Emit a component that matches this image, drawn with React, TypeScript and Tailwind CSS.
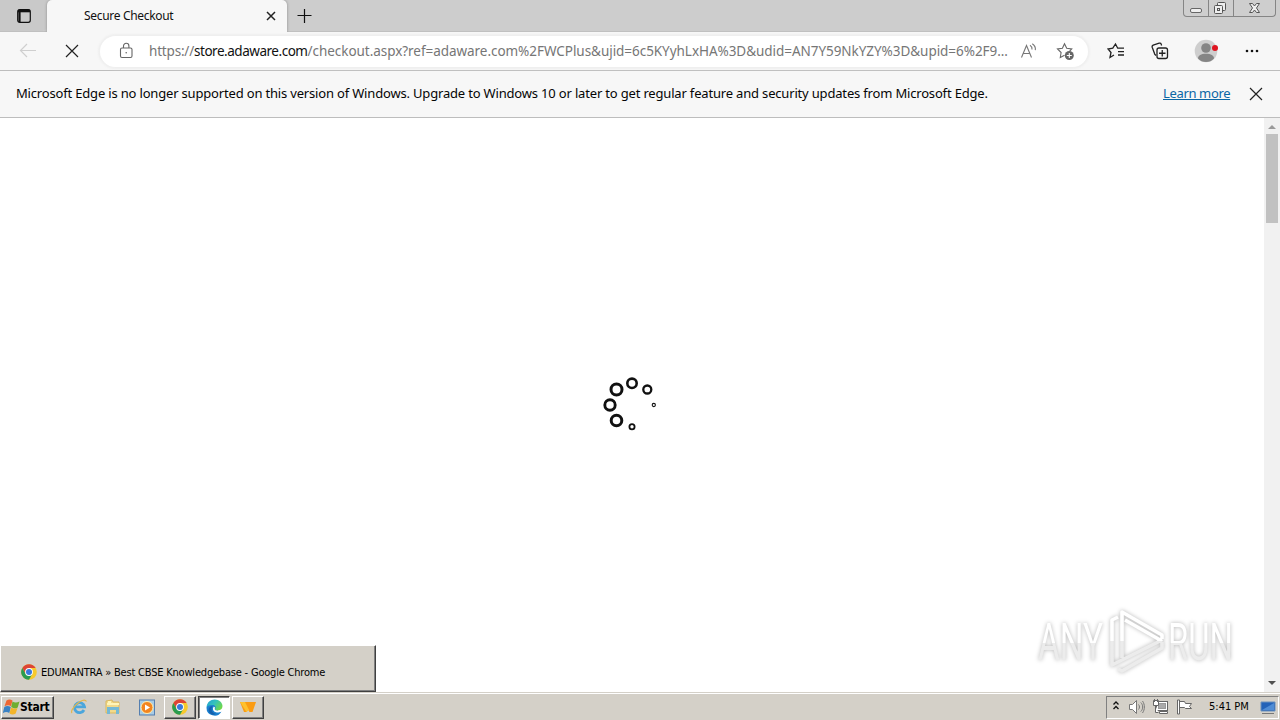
import type { ReactNode } from "react";

const RAISED = "border border-t-white border-l-white border-r-[#404040] border-b-[#404040] shadow-[inset_-1px_-1px_0_#808080]";
const SUNKEN = "border border-t-[#404040] border-l-[#404040] border-r-white border-b-white shadow-[inset_1px_1px_0_#808080]";

const SPINNER_DOTS = [
  { cx: 42, cy: 18.3, r: 4.7, w: 2.6 },
  { cx: 57.3, cy: 24.5, r: 4, w: 2.3 },
  { cx: 63.8, cy: 40, r: 1.6, w: 1.1 },
  { cx: 42, cy: 61.7, r: 2.6, w: 1.8 },
  { cx: 26.5, cy: 55.5, r: 5.3, w: 3 },
  { cx: 20, cy: 40, r: 5.2, w: 2.9 },
  { cx: 26.5, cy: 24.5, r: 5.5, w: 3 },
];

function ChromeIcon() {
  return (
    <svg width="16" height="16" viewBox="0 0 16 16">
      <circle cx="8" cy="8" r="7.8" fill="#f7c92c" />
      <path d="M1.300 4A7.800 7.800 0 0 1 14.700 4H8L4.700 10z" fill="#dd4436" />
      <path d="M1.300 4A7.800 7.800 0 0 0 8 15.800L11.300 10H4.700z" fill="#2a9c50" />
      <circle cx="8" cy="8" r="3.900" fill="#fff" />
      <circle cx="8" cy="8" r="3" fill="#3978dc" />
    </svg>
  );
}

function EdgeIcon() {
  return (
    <svg width="17" height="17" viewBox="0 0 17 17">
      <defs>
        <linearGradient id="edgeTop" x1="0" y1="0" x2="1" y2="0.6">
          <stop offset="0" stopColor="#249fd5" />
          <stop offset="0.5" stopColor="#34c2bd" />
          <stop offset="1" stopColor="#70d84a" />
        </linearGradient>
      </defs>
      <path d="M.5 8.500A8 8 0 0 0 15.500 12.500c-1.500.8-3.500 1-5 .3L16 8A8 8 0 0 0 .5 8.500z" fill="#1a80d0" />
      <path d="M.6 8C1 3.400 4.400.5 8.700.5c4.600 0 7.800 3.200 7.800 6.600 0 3-2.200 4.500-4.800 4.500-1.900 0-3-.7-2.500-1.500.8-1.200.8-4-2.700-4C3.400 6.100 1.500 7 .6 8z" fill="url(#edgeTop)" />
      <path d="M6.700 7.300C4.300 9.800 6 14 10 15.100 7 16.500 3.500 15.400 2.700 12 2.100 9.100 4.100 7.100 6.700 7.300z" fill="#1561ad" />
      <path d="M8.500 8.200c-1.500 1.500-.6 4 2.300 4.300 1.900.2 3.700-.3 5.200-1.500" fill="none" stroke="#fff" strokeWidth="1.800" />
    </svg>
  );
}

function WindowControls() {
  return (
    <div className="flex h-[17px] w-[93px] rounded-b-[4px] border border-t-0 border-[#858585] bg-[#cecece]">
      <div className="w-[25px] border-r border-[#858585]">
        <svg width="24" height="16" viewBox="0 0 24 16">
          <rect x="6.500" y="8.500" width="11" height="4" rx="1.500" fill="#eee" stroke="#666" />
        </svg>
      </div>
      <div className="w-[25px] border-r border-[#858585]">
        <svg width="24" height="16" viewBox="0 0 24 16" fill="#eee" stroke="#555">
          <rect x="8.500" y="2.500" width="8" height="8" rx="1" />
          <rect x="5.500" y="5.500" width="8" height="8" rx="1" />
          <rect x="8.500" y="8.500" width="2" height="2" />
        </svg>
      </div>
      <svg width="41" height="16" viewBox="0 0 41 16">
        <path d="M15.500 3.500h3l2 2.500 2-2.500h3l-3 4.500 3 4.500h-3l-2-2.500-2 2.500h-3l3-4.500z" fill="#eee" stroke="#555" strokeLinejoin="round" />
      </svg>
    </div>
  );
}

function TabStrip() {
  return (
    <div className="flex h-8 justify-between border-b border-[#c0c0c0] bg-[#cdcdcd]">
      <div className="flex">
        <div className="flex w-[47px] items-center justify-center rounded-br-[5px] bg-[#c9c9c9]">
          <svg width="16" height="16" viewBox="0 0 16 16" fill="none" stroke="#111" strokeWidth="1.200">
            <rect x="1.700" y="1.700" width="12.600" height="12.600" rx="2" />
            <path d="M2 3h12" strokeWidth="2.600" />
            <path d="M3.500 3v11" strokeWidth="2.200" />
          </svg>
        </div>
        <div className="-mb-px flex h-8 w-[240px] items-center justify-between rounded-t-[5px] bg-[#f7f7f7] pr-[10px] pl-[37px] shadow-[0_0_3px_#888]">
          <span className="text-[12px] tracking-[-0.320px] whitespace-nowrap text-[#111]">Secure Checkout</span>
          <svg width="12" height="12" viewBox="0 0 12 12" stroke="#222" strokeWidth="1.500">
            <path d="M2 2l8 8M10 2l-8 8" />
          </svg>
        </div>
        <svg className="mt-2 ml-[10px]" width="16" height="16" viewBox="0 0 16 16" stroke="#111" strokeWidth="1.200">
          <path d="M7.500 1v14M.5 7.500h14" />
        </svg>
      </div>
      <div className="mr-1">
        <WindowControls />
      </div>
    </div>
  );
}

function Toolbar() {
  return (
    <div className="flex h-[39px] items-center border-b border-[#bdbdbd] bg-[#f7f7f7]">
      <svg className="ml-[19px]" width="18" height="16" viewBox="0 0 18 16" fill="none" stroke="#cfcfcf" strokeWidth="1.200">
        <path d="M17 7.500H1.500M8 1L1.500 7.500 8 14" />
      </svg>
      <svg className="ml-[27px]" width="16" height="16" viewBox="0 0 16 16" stroke="#222" strokeWidth="1.200">
        <path d="M2 2l12 12M14 2L2 14" />
      </svg>
      <div className="ml-5 flex h-[31px] w-[988px] items-center rounded-full bg-white shadow-[0_0_2px_2px_#efefef]">
        <svg className="ml-[18px]" width="16" height="18" viewBox="0 0 16 18" fill="none" stroke="#666" strokeWidth="1.100">
          <rect x="2.500" y="6" width="11.500" height="9.500" rx="1.500" />
          <path d="M5.500 6V4a2.700 2.700 0 0 1 5.400 0v2" />
          <circle cx="8.200" cy="10.800" r=".8" fill="#666" stroke="none" />
        </svg>
        <div className="ml-[15px] w-[862px] text-[13.500px] whitespace-nowrap text-[#767676]">
          <span className="tracking-[-0.190px]">https://</span>
          <span className="tracking-[-0.470px] text-[#111]">store.adaware.com</span>
          <span className="tracking-[-0.045px]">/checkout.aspx?ref=adaware.com%2FWCPlus&amp;ujid=6c5KYyhLxHA%3D&amp;udid=AN7Y59NkYZY%3D&amp;upid=6%2F9...</span>
        </div>
        <svg className="ml-[9px] shrink-0" width="18" height="18" viewBox="0 0 18 18" fill="none" stroke="#777" strokeWidth="1.100">
          <path d="M1.500 15.500L6.500 3.500l5 12M3.300 11.500h6.400M10 3.200c1.700 1.100 2.200 2.700 2 4.300M12.300 1.700c2.500 1.700 3.400 4.200 3 6.500" />
        </svg>
        <svg className="ml-[18px] shrink-0" width="19" height="19" viewBox="0 0 19 19" fill="none" stroke="#666" strokeWidth="1.100">
          <path d="M8.500 13.200l-4.200 2.300.8-5L1.500 7l4.900-.7L8.500 1.800l2.200 4.500 5 .7-2 2" />
          <circle cx="13.300" cy="13.500" r="4.500" fill="#666" stroke="none" />
          <path d="M13.300 11v5M10.800 13.500h5" stroke="#fff" />
        </svg>
      </div>
      <svg className="ml-[19px]" width="18" height="18" viewBox="0 0 18 18" fill="none" stroke="#222" strokeWidth="1.300">
        <path d="M7 13l-4 2.500 1-5L1 7l4.800-.8L8.500 2l2.200 4.200H17M11 9.700h6M11 13h6" />
      </svg>
      <svg className="ml-[26px]" width="18" height="18" viewBox="0 0 18 18" fill="none" stroke="#222" strokeWidth="1.300">
        <path d="M3.700 12L1.200 5.300c-.3-1 .1-1.700 1-2.100l6-2c1-.3 1.700 0 2 .9l.4 1.400M5 13.500L3.500 12" />
        <rect x="6" y="6" width="10.500" height="10.500" rx="2" />
        <path d="M11.250 8v6.500M8 11.250h6.500" />
      </svg>
      <svg className="ml-[25px]" width="24" height="24" viewBox="0 0 24 24">
        <circle cx="12" cy="12" r="11.300" fill="#cecece" />
        <circle cx="12" cy="9" r="4.800" fill="#858585" />
        <path d="M4 19.500c0-3 3-4.700 8-4.700s8 1.700 8 4.700c-4 4.700-12 4.700-16 0z" fill="#858585" />
        <circle cx="21" cy="9" r="3" fill="#df1521" />
      </svg>
      <svg className="ml-[26px]" width="16" height="4" viewBox="0 0 16 4" fill="#111">
        <circle cx="3" cy="2" r="1.300" />
        <circle cx="8" cy="2" r="1.300" />
        <circle cx="13" cy="2" r="1.300" />
      </svg>
    </div>
  );
}

function InfoBar() {
  return (
    <div className="flex h-[47px] items-center border-b border-[#bdbdbd] bg-[#f7f7f7] pl-4 text-[13px] text-[#050505]">
      <span className="w-[1147px] tracking-[-0.176px] whitespace-nowrap">
        Microsoft Edge is no longer supported on this version of Windows. Upgrade to Windows 10 or later to get regular feature and security updates from Microsoft Edge.
      </span>
      <a className="w-[67px] tracking-[-0.350px] whitespace-nowrap text-[#0b66a5] underline underline-offset-1">Learn more</a>
      <svg className="ml-[18px]" width="16" height="16" viewBox="0 0 16 16" stroke="#222" strokeWidth="1.200">
        <path d="M2 2l12 12M14 2L2 14" />
      </svg>
    </div>
  );
}

function Scrollbar() {
  return (
    <div className="flex w-4 flex-col bg-[#f1f1f1]">
      <svg width="16" height="16" viewBox="0 0 16 16">
        <path d="M4 11l4-4 4 4z" fill="#9a9a9a" />
      </svg>
      <div className="ml-[2px] h-[89px] w-3 bg-[#c1c1c1]" />
      <svg className="mt-auto" width="16" height="16" viewBox="0 0 16 16">
        <path d="M4 5l4 4 4-4z" fill="#505050" />
      </svg>
    </div>
  );
}

function Watermark() {
  return (
    <div className="absolute top-[490px] left-[1034px] flex h-[66px] w-[202px] items-center font-['Roboto',sans-serif] text-[52px] leading-none font-normal drop-shadow-[0_0_2px_#b5b5b5]">
      <span className="mt-[3px] w-[70px] shrink-0">
        <span className="ml-[4px] inline-block origin-left scale-x-[0.640] bg-linear-to-b from-white from-50% to-[#ececec] to-50% bg-clip-text text-transparent">ANY</span>
      </span>
      <svg className="shrink-0" width="62" height="66" viewBox="0 0 62 66" fill="none" strokeWidth="3.600" strokeLinejoin="round">
        <defs>
          <linearGradient id="markFade" gradientUnits="userSpaceOnUse" x1="0" y1="0" x2="0" y2="66">
            <stop offset="0.5" stopColor="#fff" />
            <stop offset="0.5" stopColor="#ececec" />
          </linearGradient>
        </defs>
        <path d="M18 50V4l40 23v4M21 12l36 20.500L8 57V12l6-3M14 61l4 2 40-23v-6" stroke="url(#markFade)" />
      </svg>
      <span className="mt-[3px] w-[70px] shrink-0">
        <span className="ml-[2px] inline-block origin-left scale-x-[0.630] bg-linear-to-b from-white from-50% to-[#ececec] to-50% bg-clip-text text-transparent">RUN</span>
      </span>
    </div>
  );
}

function TaskPreview() {
  return (
    <div className={`absolute bottom-0 left-0 flex h-[47px] w-[376px] items-center bg-[#d4d0c8] pt-[6px] pl-5 ${RAISED}`}>
      <ChromeIcon />
      <span className="mt-[3px] ml-1 font-['DejaVu_Sans_Condensed','DejaVu_Sans',sans-serif] text-[11px] tracking-[-0.200px] whitespace-nowrap text-black">
        EDUMANTRA » Best CBSE Knowledgebase - Google Chrome
      </span>
    </div>
  );
}

function TaskButton({ active, children }: { active?: boolean; children: ReactNode }) {
  return (
    <div className={`flex h-[23px] w-8 items-center justify-center ${active ? `bg-white ${SUNKEN}` : `bg-[#d4d0c8] ${RAISED}`}`}>
      {children}
    </div>
  );
}

function QuickLaunch() {
  return (
    <div className="ml-[17px] flex items-center gap-[18px]">
      <svg width="16" height="18" viewBox="0 0 16 18" fill="none">
        <path d="M13 12A5 5 0 1 1 13.500 8.800H5" stroke="#4ba6dc" strokeWidth="2.800" />
        <path d="M1 15C-2 12 12-2 15.500 3.500" stroke="#e3b64d" strokeWidth="1.200" />
      </svg>
      <svg width="16" height="16" viewBox="0 0 16 16">
        <path d="M1 2l6-1 1 2h6v11H1z" fill="#f2da8a" stroke="#d9b860" />
        <path d="M2 5h12M3 3h3" stroke="#fff5b8" strokeWidth="2" />
        <path d="M2 8h12v7h-3v-4H5v4H2z" fill="#75b9d5" />
      </svg>
      <svg width="16" height="17" viewBox="0 0 16 17">
        <rect x=".5" y="1" width="15" height="15" fill="#a8cce5" stroke="#557fb0" />
        <circle cx="8" cy="8.500" r="6" fill="#f2851f" stroke="#fff0b3" />
        <path d="M6 5.500v6l5-3z" fill="#fff" />
      </svg>
    </div>
  );
}

function Tray() {
  return (
    <div className="mr-px ml-auto flex h-[23px] w-[173px] items-center border border-t-[#808080] border-r-white border-b-white border-l-[#808080]">
      <svg className="mb-[2px] ml-[5px]" width="8" height="12" viewBox="0 0 8 12" fill="none" stroke="#111" strokeWidth="1.300">
        <path d="M1.500 4.500L4 2l2.500 2.500M1.500 9L4 6.500 6.500 9" />
      </svg>
      <svg className="ml-[8px]" width="18" height="16" viewBox="0 0 18 16" fill="#fff" stroke="#777">
        <path d="M1.500 5.500h3l4-4v13l-4-4h-3z" />
        <path d="M10.500 5.500c1.300 1.500 1.300 3.500 0 5M12.800 3.500c2.500 2.500 2.500 6.500 0 9M14.500 2c2.500 3.500 2.500 8.500 0 12" fill="none" />
      </svg>
      <svg className="ml-[6px]" width="17" height="16" viewBox="0 0 17 16" fill="#fff" stroke="#666">
        <rect x="4.500" y="2.500" width="11" height="9" />
        <rect x="6.500" y="4.500" width="7" height="5" fill="#aaa" stroke="#999" />
        <path d="M1.500 1.500h5v5h-5zM3.500 6.500v7h3M7.500 14.500h8v-2h-8z" />
        <path d="M2.500 0v3M5.500 0v3" />
      </svg>
      <svg className="ml-[7px]" width="17" height="16" viewBox="0 0 17 16" fill="#fff" stroke="#666">
        <path d="M1.500 1v14h2V1zM3.500 2.500h5l1 2h6l-2 3 2 2h-6l-1-1h-5z" />
      </svg>
      <span className="mt-px ml-4 w-[43px] font-['DejaVu_Sans_Condensed','DejaVu_Sans',sans-serif] text-[11px] whitespace-nowrap">5:41 PM</span>
      <svg className="ml-2" width="16" height="15" viewBox="0 0 16 15">
        <path d="M1 2h14v9H1z" fill="#2463b8" stroke="#6b91bd" />
        <path d="M2 10l12-7v7z" fill="#508dd5" />
        <path d="M2 13.500h12" stroke="#777" />
      </svg>
    </div>
  );
}

function Taskbar() {
  return (
    <div className="h-7 border-t border-[#d4d0c8] bg-[#d4d0c8]">
      <div className="flex h-[27px] items-center border-t border-white pl-px">
        <div className={`flex h-[23px] w-[53px] items-center ${RAISED}`}>
          <svg className="ml-px shrink-0" width="17" height="18" viewBox="0 0 17 18">
            <path d="M3.500 2.500q3-2 6 0L8 8.300q-2.500-2-6.500 0z" fill="#ee6633" />
            <path d="M9.500 3.500q3 2 7 0L14.700 9.500q-3 2-6.500-.5z" fill="#6eae31" />
            <path d="M1.300 9q3-2 6.500 0l-1.500 6q-3-2-6.500 0z" fill="#3a82c4" />
            <path d="M8 9.500q3 2 6.500.5L12.700 15.500q-3 2-6.200 0z" fill="#f3b529" />
          </svg>
          <span className="font-['DejaVu_Sans_Condensed','DejaVu_Sans',sans-serif] text-[12px] font-bold tracking-[-0.250px] text-black">Start</span>
        </div>
        <QuickLaunch />
        <div className="ml-[9px] flex gap-[2px]">
          <TaskButton>
            <ChromeIcon />
          </TaskButton>
          <TaskButton active>
            <EdgeIcon />
          </TaskButton>
          <TaskButton>
            <svg width="16" height="14" viewBox="0 0 16 14">
              <path d="M0 2h16l-3.500 10H9.500L8 9.500 6.500 12H4z" fill="#fb9c12" />
              <path d="M0 2h5l4 8-2.500 2z" fill="#ffc12c" />
            </svg>
          </TaskButton>
        </div>
        <Tray />
      </div>
    </div>
  );
}

export default function App() {
  return (
    <div className="flex h-[720px] w-[1280px] flex-col overflow-hidden bg-white font-['Noto_Sans',sans-serif]">
      <TabStrip />
      <Toolbar />
      <InfoBar />
      <div className="relative flex flex-1">
        <main className="flex flex-1 items-center justify-center">
          <svg width="84" height="80" viewBox="0 0 84 80" fill="none" stroke="#111">
            {SPINNER_DOTS.map(({ cx, cy, r, w }) => (
              <circle key={`${cx}-${cy}`} cx={cx} cy={cy} r={r} strokeWidth={w} />
            ))}
          </svg>
        </main>
        <Scrollbar />
        <Watermark />
        <TaskPreview />
      </div>
      <Taskbar />
    </div>
  );
}
